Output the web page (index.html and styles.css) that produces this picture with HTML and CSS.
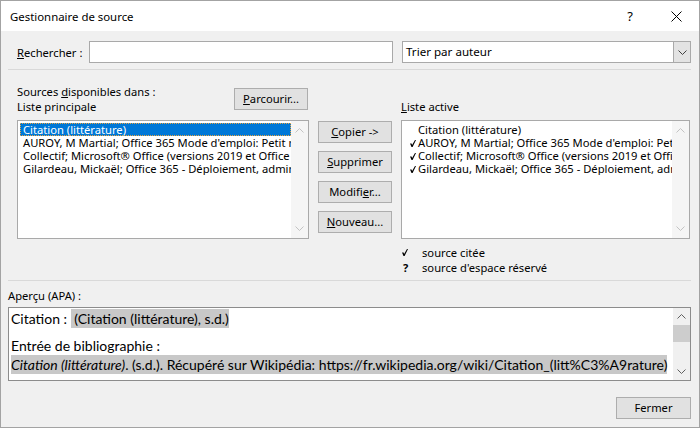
FILE: index.html
```html
<!DOCTYPE html>
<html lang="fr">
<head>
<meta charset="utf-8">
<title>Gestionnaire de source</title>
<link rel="stylesheet" href="styles.css">
</head>
<body>
<div class="window">
  <div class="titlebar">
    <span class="title">Gestionnaire de source</span>
    <span class="cap-btn cap-help">?</span>
    <span class="cap-btn cap-close"><svg width="11" height="11" viewBox="0 0 11 11"><path d="M0.5 0.5L10.5 10.5M10.5 0.5L0.5 10.5" stroke="#000" stroke-width="1" fill="none"/></svg></span>
  </div>
  <div class="body">
    <div class="search-row">
      <span class="search-label"><u>R</u>echercher :</span>
      <div class="textbox"></div>
      <div class="combo">
        <span class="combo-text">Trier par auteur</span>
        <span class="combo-btn"><svg width="9" height="5" viewBox="0 0 9 5"><path d="M0.5 0.5L4.5 4.5L8.5 0.5" stroke="#404040" stroke-width="1" fill="none"/></svg></span>
      </div>
    </div>
    <div class="sep"></div>
    <div class="main">
      <div class="left-head">
        <div class="labels">
          <div>Sources <u>d</u>isponibles dans :</div>
          <div>Liste principale</div>
        </div>
        <button class="btn btn-browse"><span class="btn-label"><u>P</u>arcourir...</span></button>
      </div>
      <div class="mid-head"></div>
      <div class="right-head"><u>L</u>iste active</div>

      <div class="listbox">
        <div class="items">
          <div class="item selected">Citation (littérature)</div>
          <div class="item">AUROY, M Martial; Office 365 Mode d'emploi: Petit manuel</div>
          <div class="item">Collectif; Microsoft® Office (versions 2019 et Office 365)</div>
          <div class="item">Gilardeau, Mickaël; Office 365 - Déploiement, administration</div>
        </div>
        <div class="vscroll disabled">
          <svg width="9" height="5" viewBox="0 0 9 5"><path d="M0.5 4.5L4.5 0.5L8.5 4.5" stroke="#c3c3c3" stroke-width="1" fill="none"/></svg>
          <svg width="9" height="5" viewBox="0 0 9 5"><path d="M0.5 0.5L4.5 4.5L8.5 0.5" stroke="#c3c3c3" stroke-width="1" fill="none"/></svg>
        </div>
      </div>
      <div class="mid-buttons">
        <button class="btn"><span class="btn-label"><u>C</u>opier -&gt;</span></button>
        <button class="btn"><span class="btn-label"><u>S</u>upprimer</span></button>
        <button class="btn"><span class="btn-label">Modifi<u>e</u>r...</span></button>
        <button class="btn"><span class="btn-label"><u>N</u>ouveau...</span></button>
      </div>
      <div class="listbox">
        <div class="items">
          <div class="item active-item"><span class="chk"></span><span class="itext">Citation (littérature)</span></div>
          <div class="item active-item"><span class="chk"><svg width="6" height="7" viewBox="0 0 6 7"><path d="M0 3.6L1.6 3.6L2.1 5L5 0L6 0L2.6 7L1.5 7Z" fill="#000"/></svg></span><span class="itext">AUROY, M Martial; Office 365 Mode d'emploi: Petit manuel</span></div>
          <div class="item active-item"><span class="chk"><svg width="6" height="7" viewBox="0 0 6 7"><path d="M0 3.6L1.6 3.6L2.1 5L5 0L6 0L2.6 7L1.5 7Z" fill="#000"/></svg></span><span class="itext">Collectif; Microsoft® Office (versions 2019 et Office 365)</span></div>
          <div class="item active-item"><span class="chk"><svg width="6" height="7" viewBox="0 0 6 7"><path d="M0 3.6L1.6 3.6L2.1 5L5 0L6 0L2.6 7L1.5 7Z" fill="#000"/></svg></span><span class="itext">Gilardeau, Mickaël; Office 365 - Déploiement, administration</span></div>
        </div>
        <div class="vscroll disabled">
          <svg width="9" height="5" viewBox="0 0 9 5"><path d="M0.5 4.5L4.5 0.5L8.5 4.5" stroke="#c3c3c3" stroke-width="1" fill="none"/></svg>
          <svg width="9" height="5" viewBox="0 0 9 5"><path d="M0.5 0.5L4.5 4.5L8.5 0.5" stroke="#c3c3c3" stroke-width="1" fill="none"/></svg>
        </div>
      </div>

      <div class="left-foot"></div>
      <div class="mid-foot"></div>
      <div class="legend">
        <div class="legend-row"><span class="legend-icon"><svg width="6" height="7" viewBox="0 0 6 7"><path d="M0 3.6L1.6 3.6L2.1 5L5 0L6 0L2.6 7L1.5 7Z" fill="#000"/></svg></span><span>source citée</span></div>
        <div class="legend-row"><span class="legend-icon q">?</span><span>source d'espace réservé</span></div>
      </div>
    </div>
    <div class="sep sep2"></div>
    <div class="preview-label">Aperçu (APA) :</div>
    <div class="preview">
      <div class="preview-text">
        <p class="pline">Citation : <span class="hl">&nbsp;(Citation (littérature), s.d.)</span></p>
        <p class="pline pgap">Entrée de bibliographie :</p>
        <p class="pline"><span class="hl"><i>Citation (littérature)</i>. (s.d.). Récupéré sur Wikipédia: https://fr.wikipedia.org/wiki/Citation_(litt%C3%A9rature)</span></p>
      </div>
      <div class="pscroll">
        <span class="sarrow"><svg width="9" height="5" viewBox="0 0 9 5"><path d="M0.5 4.5L4.5 0.5L8.5 4.5" stroke="#606060" stroke-width="1" fill="none"/></svg></span>
        <span class="thumb"></span>
        <span class="strack"></span>
        <span class="sarrow"><svg width="9" height="5" viewBox="0 0 9 5"><path d="M0.5 0.5L4.5 4.5L8.5 0.5" stroke="#606060" stroke-width="1" fill="none"/></svg></span>
      </div>
    </div>
    <div class="footer">
      <button class="btn btn-close"><span class="btn-label">Fermer</span></button>
    </div>
  </div>
</div>
</body>
</html>
```

FILE: styles.css
```css
* { box-sizing: border-box; }
html, body { margin: 0; padding: 0; }
body {
  width: 700px;
  height: 428px;
  background: #f0f0f0;
  font-family: "Noto Sans", "Open Sans", sans-serif;
  font-size: 11.2px;
  color: #000;
  overflow: hidden;
}
u { text-decoration: underline; text-underline-offset: 1px; }

.window {
  width: 700px;
  height: 428px;
  border: 1px solid #a3a3a3;
  background: #f0f0f0;
  display: flex;
  flex-direction: column;
}

.titlebar {
  flex: none;
  height: 30px;
  background: #fff;
  display: flex;
  align-items: center;
}
.title { flex: 1; padding-left: 9px; font-size: 11.4px; }
.cap-btn {
  width: 46px;
  height: 30px;
  display: flex;
  align-items: center;
  justify-content: center;
}
.cap-help { font-size: 13px; }

.body {
  flex: 1;
  display: flex;
  flex-direction: column;
  padding: 10px 8px 0 7px;
}

.search-row {
  display: flex;
  align-items: center;
  height: 22px;
  padding-left: 9px;
}
.search-label { width: 72px; flex: none; }
.textbox {
  width: 304px;
  height: 22px;
  background: #fff;
  border: 1px solid #a9a9a9;
}
.combo {
  flex: 1;
  margin-left: 9px;
  height: 22px;
  background: #fff;
  border: 1px solid #a9a9a9;
  display: flex;
}
.combo-text { flex: 1; padding-left: 3px; line-height: 20px; font-size: 11.6px; }
.combo-btn {
  width: 18px;
  background: #e3e3e3;
  border: 1px solid #a9a9a9;
  margin: -1px -1px -1px 0;
  display: flex;
  align-items: center;
  justify-content: center;
}

.sep { height: 1px; background: #d9d9d9; margin-top: 6px; flex: none; }
.sep2 { margin-top: 5px; }

.main {
  display: grid;
  grid-template-columns: 292px 74px 289px;
  grid-template-rows: 30px 119px 30px;
  column-gap: 9px;
  row-gap: 6px;
  padding: 14px 0 0 9px;
}

.left-head { display: flex; justify-content: space-between; }
.labels { line-height: 15px; }
.btn {
  font-family: inherit;
  font-size: 11.2px;
  color: #000;
  height: 22px;
  background: #e1e1e1;
  border: 1px solid #adadad;
  padding: 0;
  margin: 0;
  display: block;
  text-align: center;
}
.btn-label { display: block; line-height: 20px; white-space: nowrap; }
.btn-browse { width: 74px; margin: 4px 1px 0 0; }
.right-head { padding-top: 15px; line-height: 15px; }

.listbox {
  background: #fff;
  border: 1px solid #a9a9a9;
  display: flex;
  overflow: hidden;
}
.items {
  flex: 1;
  padding: 2px 0 0 2px;
  overflow: hidden;
  min-width: 0;
}
.item {
  height: 13px;
  line-height: 13px;
  white-space: nowrap;
  overflow: hidden;
  padding-left: 3px;
}
.item.selected {
  background: #0078d7;
  color: #fff;
  outline: 1px dotted #e9a441;
  outline-offset: -1px;
}
.active-item { padding-left: 0; display: flex; align-items: center; }
.itext { white-space: nowrap; }
.chk {
  width: 14px;
  flex: none;
  display: flex;
  justify-content: flex-end;
  padding-right: 2px;
  padding-top: 1px;
}
.vscroll {
  width: 17px;
  flex: none;
  background: #f5f5f5;
  display: flex;
  flex-direction: column;
  justify-content: space-between;
  align-items: center;
  padding: 7px 0 7px;
}

.mid-buttons {
  display: flex;
  flex-direction: column;
  gap: 8px;
  padding-top: 1px;
}
.mid-buttons .btn { width: 74px; }

.legend { grid-column: 3; line-height: 15px; }
.legend-row { display: flex; align-items: center; height: 15px; }
.legend-icon {
  width: 21px;
  flex: none;
  padding-left: 1px;
  display: flex;
  align-items: center;
}
.legend-icon.q { font-weight: bold; font-size: 11px; padding-left: 2px; }

.preview-label { margin-top: 7px; line-height: 15px; }
.preview {
  margin-top: 4px;
  height: 74px;
  background: #fff;
  border: 1px solid #8c8c8c;
  display: flex;
}
.preview-text {
  flex: 1;
  padding: 1px 0 0 2px;
  font-family: "Lato", sans-serif;
  font-size: 14px;
  overflow: hidden;
  min-width: 0;
}
.pline { margin: 0; line-height: 19px; height: 19px; white-space: nowrap; }
.pgap { margin-top: 8px; }
.hl { background: #c8c8c8; display: inline-block; height: 19px; }
.pscroll {
  width: 17px;
  flex: none;
  background: #f0f0f0;
  display: flex;
  flex-direction: column;
}
.sarrow {
  height: 17px;
  display: flex;
  align-items: center;
  justify-content: center;
  flex: none;
}
.thumb { height: 17px; background: #cdcdcd; flex: none; }
.strack { flex: 1; }

.footer {
  display: flex;
  justify-content: flex-end;
  margin-top: 16px;
}
.btn-close { width: 75px; }
```
